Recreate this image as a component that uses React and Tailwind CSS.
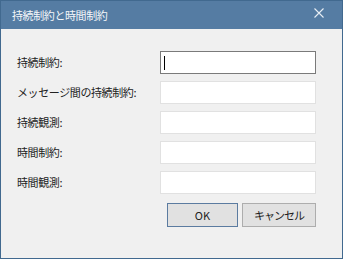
import React from 'react';

const fields = ['持続制約:', 'メッセージ間の持続制約:', '持続観測:', '時間制約:', '時間観測:'];

export default function App() {
  return (
    <div
      className="w-[343px] h-[259px] border border-[#41698f] bg-[#f0f0f0] flex flex-col text-[11px] tracking-[-0.4px] text-[#222]"
      style={{ fontFamily: '"Noto Sans CJK JP", "Noto Sans", sans-serif' }}
    >
      {/* title bar */}
      <div className="h-[28px] bg-[#557ca3] flex items-center justify-between pl-[11px] pr-[18px] shrink-0">
        <span className="text-[#f4f7fa] text-[11px] leading-none">持続制約と時間制約</span>
        <svg width="10" height="10" viewBox="0 0 10 10" className="mt-[-4px]">
          <path d="M0.5 0.5L9.5 9.5M9.5 0.5L0.5 9.5" stroke="#e8eef5" strokeWidth="1.1" />
        </svg>
      </div>

      <div className="flex flex-col pt-[22px] pl-[16px] gap-[7px]">
        {fields.map((label, i) => (
          <div key={label} className="flex items-center h-[23px]">
            <span className="w-[143px] leading-none">{label}</span>
            <div
              className={`w-[156px] h-[23px] bg-white border ${
                i === 0 ? 'border-[#7a7a7a]' : 'border-[#e1e1e1]'
              } flex items-center pl-[3px]`}
            >
              {i === 0 && <div className="w-[1px] h-[14px] bg-black" />}
            </div>
          </div>
        ))}
      </div>

      <div className="flex pl-[166px] gap-[4px] mt-[9px]">
        <button className="w-[71px] h-[24px] border border-[#5b7ba0] bg-[#e1e1e1] text-[11px] tracking-normal leading-none">
          OK
        </button>
        <button className="w-[74px] h-[24px] border border-[#adadad] bg-[#e1e1e1] text-[11px] tracking-[-1px] leading-none">
          キャンセル
        </button>
      </div>
    </div>
  );
}
